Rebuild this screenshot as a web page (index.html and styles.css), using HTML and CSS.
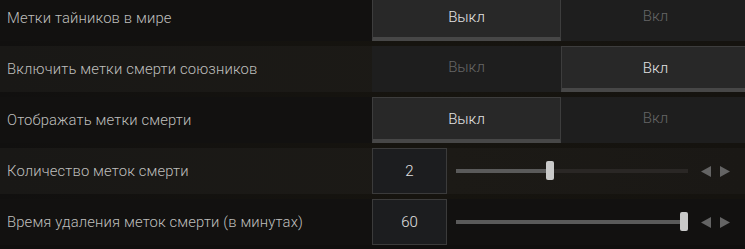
FILE: index.html
```html
<!DOCTYPE html>
<html lang="ru">
<head>
<meta charset="utf-8">
<link rel="stylesheet" href="styles.css">
</head>
<body>
<div class="settings">
  <div class="row">
    <div class="label">Метки тайников в мире</div>
    <div class="toggle">
      <div class="opt active">Выкл</div>
      <div class="opt">Вкл</div>
    </div>
  </div>
  <div class="row band">
    <div class="label">Включить метки смерти союзников</div>
    <div class="toggle">
      <div class="opt">Выкл</div>
      <div class="opt active">Вкл</div>
    </div>
  </div>
  <div class="row">
    <div class="label">Отображать метки смерти</div>
    <div class="toggle">
      <div class="opt active">Выкл</div>
      <div class="opt">Вкл</div>
    </div>
  </div>
  <div class="row band">
    <div class="label">Количество меток смерти</div>
    <div class="slider">
      <div class="value">2</div>
      <div class="track">
        <div class="fill" style="width: 40%"></div>
        <div class="thumb" style="left: calc(40% * (232 - 8) / 232)"></div>
      </div>
      <div class="arrows">
        <svg width="10" height="11" viewBox="0 0 10 11"><polygon points="10,0 10,11 0,5.5" fill="#646464"/></svg>
        <svg width="10" height="11" viewBox="0 0 10 11"><polygon points="0,0 0,11 10,5.5" fill="#646464"/></svg>
      </div>
    </div>
  </div>
  <div class="row">
    <div class="label">Время удаления меток смерти (в минутах)</div>
    <div class="slider">
      <div class="value">60</div>
      <div class="track">
        <div class="fill" style="width: 100%"></div>
        <div class="thumb" style="left: calc(100% - 8px)"></div>
      </div>
      <div class="arrows">
        <svg width="10" height="11" viewBox="0 0 10 11"><polygon points="10,0 10,11 0,5.5" fill="#646464"/></svg>
        <svg width="10" height="11" viewBox="0 0 10 11"><polygon points="0,0 0,11 10,5.5" fill="#646464"/></svg>
      </div>
    </div>
  </div>
</div>
</body>
</html>
```

FILE: styles.css
```css
html, body {
  margin: 0;
  padding: 0;
  width: 745px;
  height: 249px;
  overflow: hidden;
  background: #100f0e;
  font-family: Roboto, "Liberation Sans", sans-serif;
}

.settings {
  display: flex;
  flex-direction: column;
  gap: 5px;
  margin-top: -5px;
  background: linear-gradient(90deg, #11100f 0%, #16140f 55%, #15130f 100%);
}

.row {
  display: grid;
  grid-template-columns: 372px 378px;
  height: 46px;
  background: #121110;
}

.row.band {
  background: linear-gradient(90deg, #191816 0%, #1c1a16 60%, #1a1815 100%);
}

.label {
  display: flex;
  align-items: center;
  padding-left: 7px;
  color: #bfbfbd;
  font-size: 14.8px;
  font-weight: 300;
  letter-spacing: 0.15px;
}

.toggle {
  display: flex;
}

.opt {
  box-sizing: border-box;
  width: 189px;
  height: 46px;
  display: flex;
  align-items: center;
  justify-content: center;
  padding-bottom: 4px;
  background: #1e1e1e;
  color: #666666;
  font-size: 15px;
  font-weight: 300;
}

.opt.active {
  background: #282828;
  border: 1px solid #3d3d3d;
  border-bottom: 4px solid #474747;
  padding-bottom: 0;
  color: #e2e2e2;
}

.slider {
  display: flex;
  align-items: center;
}

.value {
  box-sizing: border-box;
  width: 75px;
  height: 46px;
  display: flex;
  align-items: center;
  justify-content: center;
  background: #1c1d1f;
  border: 1px solid #3b3b3b;
  color: #e2e2e2;
  font-size: 15px;
  font-weight: 300;
}

.track {
  position: relative;
  width: 232px;
  height: 4px;
  margin-left: 9px;
  background: #2a2725;
}

.fill {
  height: 4px;
  background: #5a5a5a;
}

.thumb {
  position: absolute;
  top: -8px;
  width: 8px;
  height: 19px;
  border-radius: 2px;
  background: #c9c9c9;
}

.arrows {
  display: flex;
  gap: 9px;
  margin-left: 13px;
}

.arrows svg {
  display: block;
}
```
